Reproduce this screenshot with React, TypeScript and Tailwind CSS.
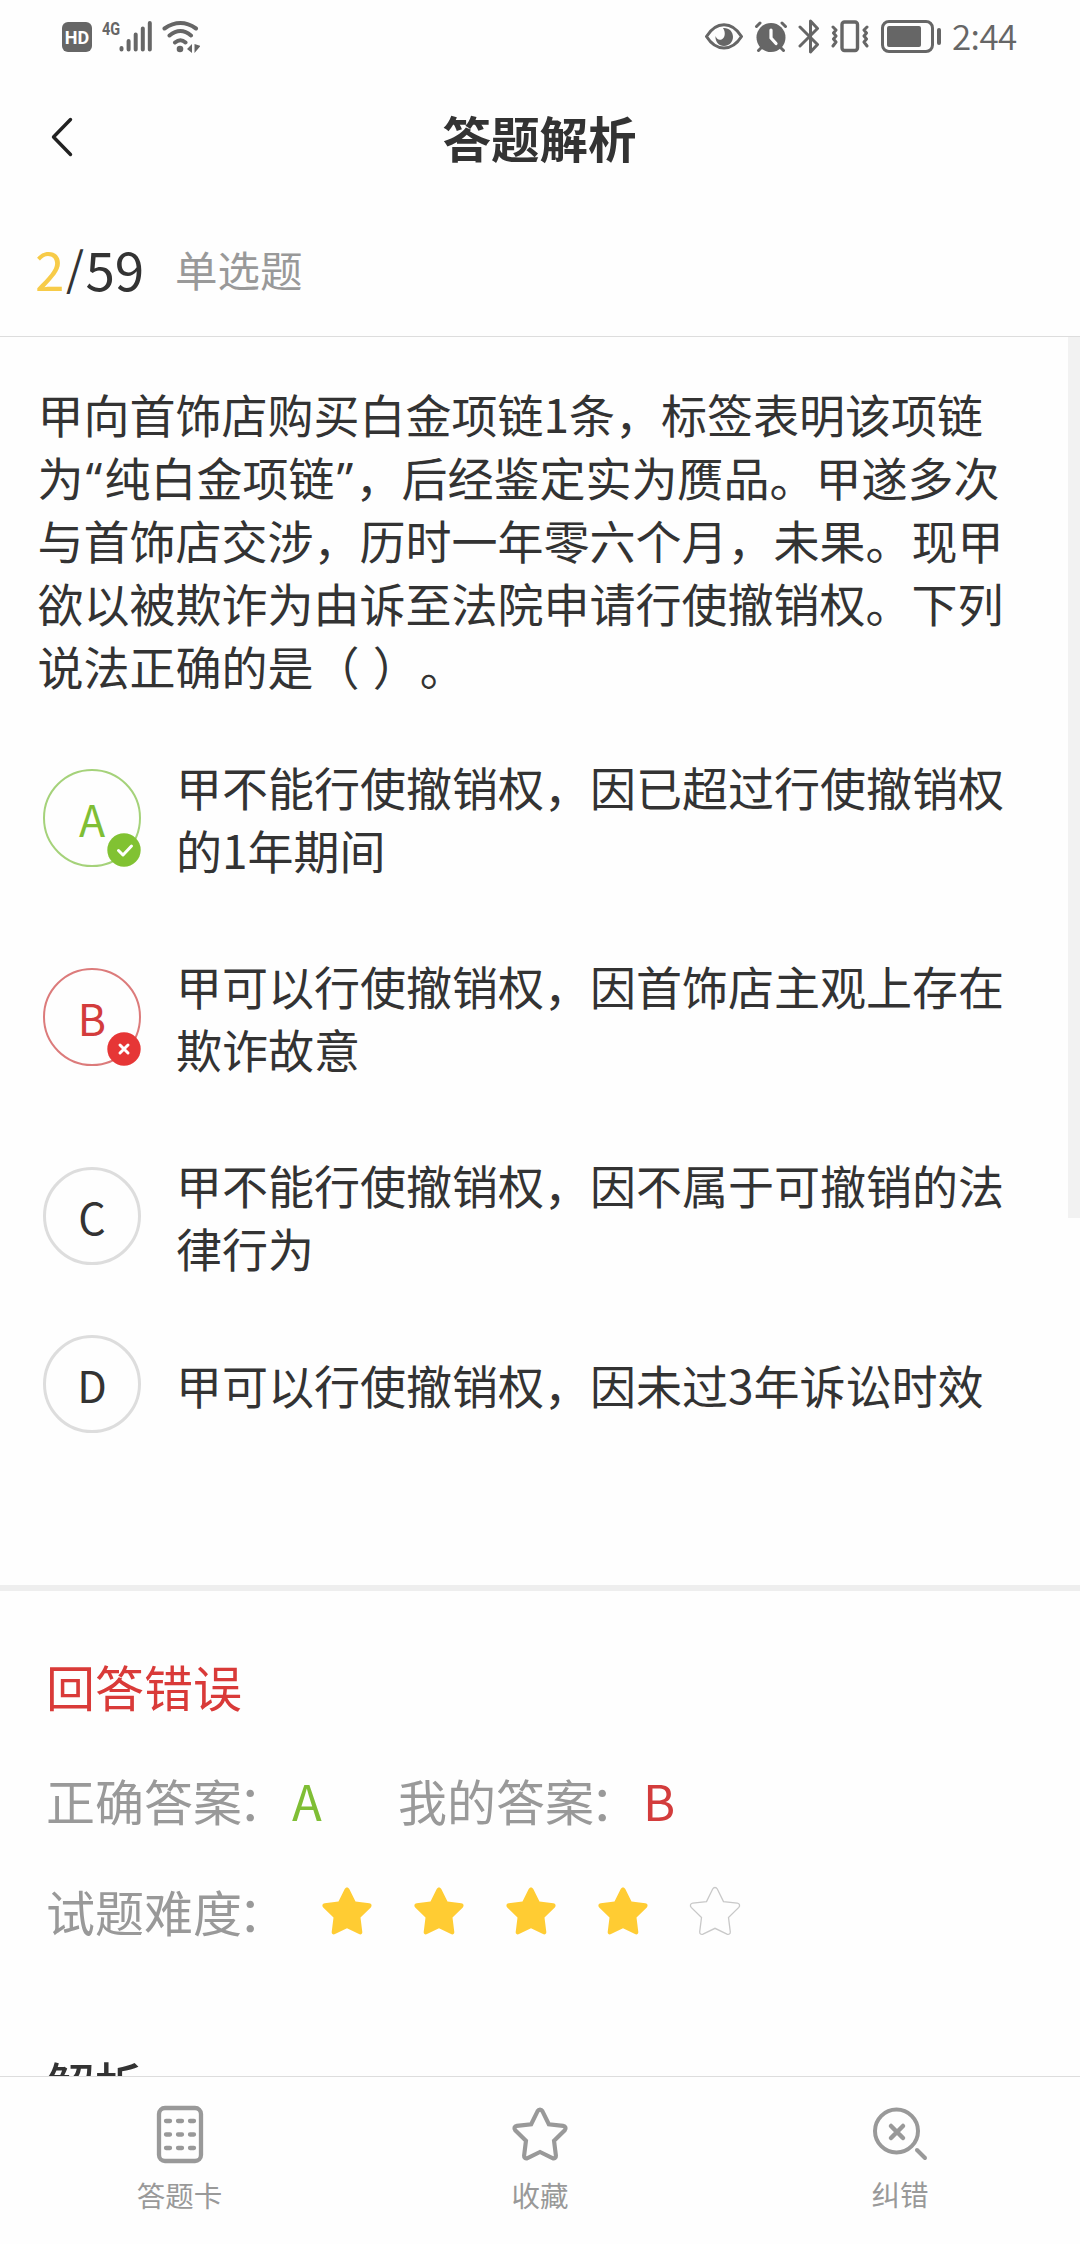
import React from "react";

const STAR =
  "M25 1.5c1 0 1.8.6 2.3 1.5l6.2 12.6 13.8 1.6c2.3.3 3 2.5 1.500 4.200L38.500 31.500l1.800 14.400c.2 2-1.500 3-3.300 2.200L25 42.300l-12 5.800c-1.800.8-3.500-.2-3.300-2.200l1.800-14.400L1.200 21.400C-.3 19.700.4 17.500 2.700 17.200l13.800-1.600L22.700 3c.5-.9 1.300-1.500 2.300-1.500z";

function StatusBar() {
  return (
    <div className="flex h-[74px] items-start justify-between pl-[62px] pr-[62px] text-[#666]">
      <div className="flex pt-[18px]">
        <div className="mt-1 flex h-[30px] w-[30px] items-center justify-center rounded-[6px] bg-[#666] font-['Roboto'] text-[18px] font-bold text-white">
          HD
        </div>
        <span className="ml-[10px] mt-[2px] w-[17px] origin-left scale-x-[0.78] font-['Roboto'] text-[18.500px] leading-[18px] font-bold">
          4G
        </span>
        <svg className="mt-[2px]" width="34" height="34" viewBox="0 0 34 34" stroke="currentColor" strokeWidth="4" strokeLinecap="round">
          <path d="M2.500 28v1.500M9.600 21v8.500M16.700 14.500v15M23.800 8.500v21M30.800 3v26.500" />
        </svg>
        <svg className="ml-[9px]" width="38" height="36" viewBox="0 0 38 36" fill="none" stroke="currentColor" strokeLinecap="round" strokeWidth="4">
          <path d="M2.500 10.500Q18.500-.5 34 10.500M7.500 17.500Q18.500 8.500 29 17.500M13 24.500Q18.500 20 23.500 24.500" />
          <circle cx="18" cy="31" r="3.300" fill="currentColor" stroke="none" />
          <path d="M30 26v9l-5-4zM32.500 26v9l6-7z" fill="currentColor" stroke="none" />
        </svg>
      </div>
      <div className="flex items-start">
        <svg className="mt-[23px]" width="38" height="27" viewBox="0 0 38 27" fill="none" stroke="currentColor" strokeWidth="3">
          <path d="M1.500 13.500C6.500 5.500 12 1.800 19 1.800s12.500 3.700 17.500 11.700C31.500 21.500 26 25 19 25S6.500 21.500 1.500 13.500z" strokeLinejoin="round" />
          <path d="M18 5c6-.5 10 3.500 10 9 0 5-4 9-9 9s-9-4-8.500-10c1 3 3.500 4.500 6 3.500 3.500-1.500 4.500-7 1.500-11.500z" fill="currentColor" stroke="none" />
        </svg>
        <svg className="ml-[11px] mt-[20px]" width="34" height="33" viewBox="0 0 34 33" fill="none" stroke="currentColor" strokeWidth="3" strokeLinecap="round">
          <circle cx="17" cy="17.500" r="14.500" fill="currentColor" stroke="none" />
          <path d="M2.500 6.500 6 3M31.500 6.500 28 3M4.500 30.500 7 28M29.500 30.500 27 28" />
          <path d="M17 10v8l5 5.500" stroke="#fff" strokeWidth="3.200" />
        </svg>
        <svg className="ml-[10px] mt-[19px]" width="23" height="35" viewBox="0 0 23 35" fill="none" stroke="currentColor" strokeWidth="3" strokeLinejoin="round" strokeLinecap="round">
          <path d="M2 8l17.500 17.500L12.500 33V2l7 7.500L2 27" />
        </svg>
        <svg className="ml-[10px] mt-[20px]" width="38" height="33" viewBox="0 0 38 33" fill="none" stroke="currentColor" strokeWidth="3" strokeLinejoin="round" strokeLinecap="round">
          <rect x="11" y="2" width="15.500" height="28.500" rx="2.500" strokeWidth="3.400" />
          <path d="M2 7l3 3-2.500 3L5 16l-2.500 3L5 22l-3 4M36 7l-3 3 2.500 3L33 16l2.500 3L33 22l3 4" />
        </svg>
        <div className="ml-[12px] mt-[20px] h-[33px] w-[53px] rounded-[8px] border-[3px] border-[#666] p-[3px]">
          <div className="h-[21px] w-[34px] rounded-[2px] bg-[#666]" />
        </div>
        <div className="ml-[3px] mt-[28px] h-[17px] w-[4px] rounded-full bg-[#666]" />
        <span className="ml-[11px] mt-[17px] w-[66px] text-[35px] leading-[36px] font-[350] tracking-[-0.6px] whitespace-nowrap">2:44</span>
      </div>
    </div>
  );
}

type State = "correct" | "wrong" | "none";

function Mark({ letter, state }: { letter: string; state: State }) {
  const tone =
    state === "correct"
      ? "border-[2px] border-[#a5d27a] text-[#7fbe35]"
      : state === "wrong"
        ? "border-[2px] border-[#dc7b7b] text-[#d33c3c]"
        : "border-[3px] border-[#ddd] text-[#333]";
  return (
    <div className={`relative flex h-[98px] w-[98px] shrink-0 items-center justify-center rounded-full text-[43px] leading-[60px] ${tone}`}>
      <span>{letter}</span>
      {state !== "none" && (
        <svg
          className={`absolute -right-[2px] -bottom-[2px] ${state === "correct" ? "text-[#81c232]" : "text-[#e63636]"}`}
          width="34"
          height="34"
          viewBox="0 0 34 34"
          fill="none"
        >
          <circle cx="17" cy="17" r="16.700" fill="currentColor" />
          <path
            d={state === "correct" ? "M11.500 17.500l4.500 4.500 8.500-9" : "M13 13l8 8M21 13l-8 8"}
            stroke="#fff"
            strokeWidth={3}
            strokeLinecap="round"
            strokeLinejoin="round"
          />
        </svg>
      )}
    </div>
  );
}

const options: { letter: string; state: State; lines: string[]; box: string }[] = [
  { letter: "A", state: "correct", lines: ["甲不能行使撤销权，因已超过行使撤销权", "的1年期间"], box: "mt-[58px]" },
  { letter: "B", state: "wrong", lines: ["甲可以行使撤销权，因首饰店主观上存在", "欺诈故意"], box: "mt-[73px]" },
  { letter: "C", state: "none", lines: ["甲不能行使撤销权，因不属于可撤销的法", "律行为"], box: "mt-[73px]" },
  { letter: "D", state: "none", lines: ["甲可以行使撤销权，因未过3年诉讼时效"], box: "mt-[56px]" },
];

function Quote({ children }: { children: string }) {
  return <span className="inline-block h-[40px] w-[21px] text-center align-baseline font-['Noto_Sans'] leading-[40px]">{children}</span>;
}

function Label({ text }: { text: string }) {
  return (
    <span className="inline-block w-[244px] whitespace-nowrap">
      {text}
      <span className="-ml-[4px]">：</span>
    </span>
  );
}

function Stars() {
  return (
    <div className="flex gap-[42px]">
      {[1, 2, 3, 4, 5].map((n) => (
        <svg key={n} width="50" height="50" viewBox="0 0 50 50" className="overflow-visible">
          <path d={STAR} fill={n < 5 ? "#ffcc33" : "none"} stroke={n < 5 ? "none" : "#c8c8c8"} strokeWidth="1.300" />
        </svg>
      ))}
    </div>
  );
}

export default function App() {
  return (
    <div className="flex h-[2244px] w-[1080px] flex-col overflow-hidden bg-[#fefefe] font-['Noto_Sans_CJK_SC',sans-serif] text-[#333] [text-spacing-trim:space-all]">
      <StatusBar />
      <header className="grid h-[126px] grid-cols-[1fr_auto_1fr] items-center pb-[1px]">
        <svg className="ml-[51px]" width="23" height="40" viewBox="0 0 23 40" fill="none" stroke="#222" strokeWidth="3.400" strokeLinecap="round" strokeLinejoin="round">
          <path d="M19.500 2.500 2.500 20l17 17.500" />
        </svg>
        <h1 className="pr-[1px] text-[48.500px] leading-[60px] font-bold">答题解析</h1>
        <span />
      </header>
      <div className="flex h-[137px] items-center border-b border-[#ddd] pl-[35px]">
        <span className="flex w-[140px] items-center text-[53px] leading-[70px]">
          <span className="text-[#f7cb48]">2</span>
          <span className="w-[21px] pb-[4px] text-center text-[46px]">/</span>
          <span>59</span>
        </span>
        <span className="pt-[1px] text-[42.500px] leading-[70px] text-[#999]">单选题</span>
      </div>

      <main className="flex min-h-0 flex-1 overflow-hidden">
        <div className="w-[1068px] shrink-0">
          <div className="pt-[45px] pl-[37.500px] text-[46px] leading-[63px] whitespace-nowrap">
            <p>甲向首饰店购买白金项链1条，标签表明该项链</p>
            <p className="h-[63px]">
              为<Quote>“</Quote>纯白金项链<Quote>”</Quote>，后经鉴定实为赝品。甲遂多次
            </p>
            <p>与首饰店交涉，历时一年零六个月，未果。现甲</p>
            <p>欲以被欺诈为由诉至法院申请行使撤销权。下列</p>
            <p>
              说法正确的是（<span className="ml-[3px]"> ）</span>
              <span className="ml-[1px]">。</span>
            </p>
          </div>
          <ul className="pl-[43px]">
            {options.map((o) => (
              <li key={o.letter} className={`flex items-center gap-[35px] ${o.box}`}>
                <Mark letter={o.letter} state={o.state} />
                <div className="text-[46px] leading-[63px] whitespace-nowrap">
                  {o.lines.map((l) => (
                    <p key={l}>{l}</p>
                  ))}
                </div>
              </li>
            ))}
          </ul>
          <div className="mt-[152px] h-[6px] w-[1080px] bg-[#eee]" />
          <div className="pl-[46px] text-[49px] text-[#999]">
            <p className="mt-[60px] leading-[70px] text-[#d93a38]">回答错误</p>
            <div className="mt-[44px] flex leading-[70px]">
              <Label text="正确答案" />
              <span className="w-[108px] pl-[2px] text-[#7fbe35]">A</span>
              <Label text="我的答案" />
              <span className="pl-[1px] text-[#d33c3c]">B</span>
            </div>
            <div className="mt-[41px] flex items-center leading-[70px]">
              <div className="w-[276px]">
                <Label text="试题难度" />
              </div>
              <Stars />
            </div>
            <p className="mt-[102px] text-[48.500px] leading-[70px] font-medium text-[#333]">解析</p>
          </div>
        </div>
        <div className="h-[881px] w-[12px] bg-[#f2f2f2]" />
      </main>

      <nav className="grid h-[168px] shrink-0 grid-cols-3 border-t border-[#ddd] pt-[28px] text-[28.500px] leading-[40px] text-[#999]">
        <div className="flex flex-col items-center pr-[1px]">
          <svg width="48" height="60" viewBox="0 0 48 60" fill="none" stroke="currentColor" strokeWidth="4.300">
            <rect x="3" y="3" width="42" height="53" rx="6" />
            <path d="M10 16h4M22 16h4M34 16h4M10 29.500h4M22 29.500h4M34 29.500h4M10 43h4M22 43h4M34 43h4" strokeLinecap="round" />
          </svg>
          <span className="mt-[10px]">答题卡</span>
        </div>
        <div className="flex flex-col items-center">
          <svg width="60" height="60" viewBox="-5 -3.500 60 60" fill="none" stroke="currentColor" strokeWidth="4">
            <path d={STAR} transform="translate(-1 -0.500) scale(1.040)" />
          </svg>
          <span className="mt-[10px]">收藏</span>
        </div>
        <div className="flex flex-col items-center">
          <svg width="56" height="60" viewBox="0 0 56 60" fill="none" stroke="currentColor" strokeWidth="4" strokeLinecap="round">
            <circle cx="24.500" cy="26" r="21.500" />
            <path d="M45 45l8 8" />
            <path d="M19 21l12 12M31 21L19 33" strokeWidth="4.500" />
          </svg>
          <span className="mt-[9px]">纠错</span>
        </div>
      </nav>
    </div>
  );
}
